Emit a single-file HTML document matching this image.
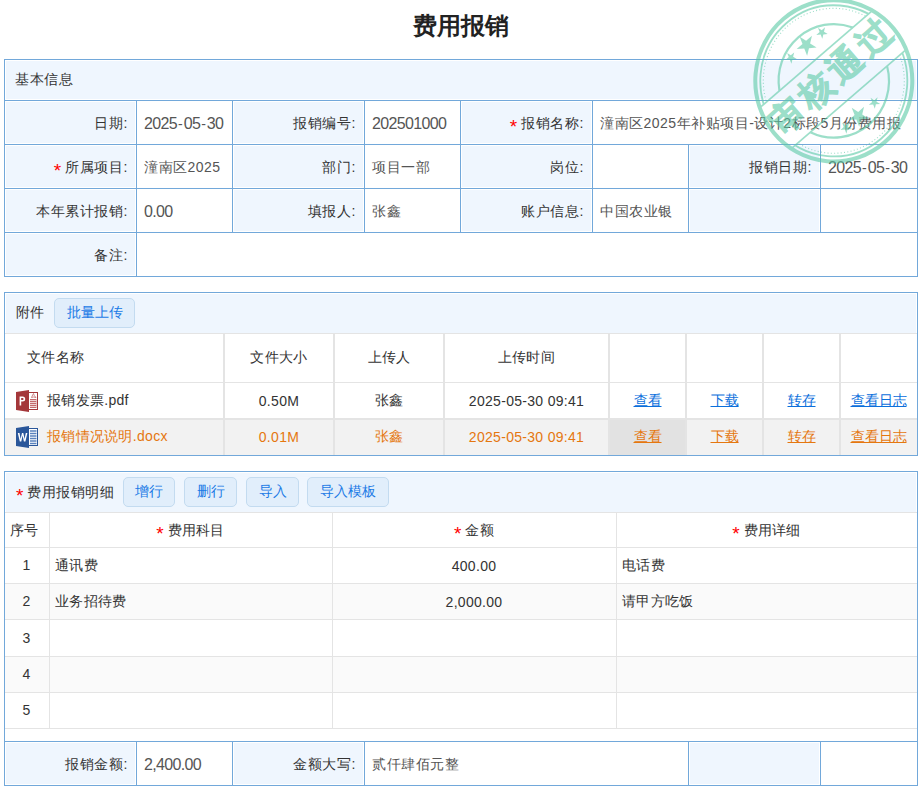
<!DOCTYPE html>
<html><head><meta charset="utf-8"><style>
html,body{margin:0;padding:0;background:#fff;}
body{width:922px;height:790px;position:relative;overflow:hidden;font-family:"Liberation Sans",sans-serif;}
.t{position:absolute;display:flex;align-items:center;box-sizing:border-box;white-space:nowrap;}
.d{font-size:16px;letter-spacing:-0.65px;}.h{margin:0 1px;letter-spacing:0;}
.btn{justify-content:center;background:#e1eefb;border:1px solid #c3dbf0;border-radius:5px;color:#1a7ae6;font-size:14px;}
</style></head><body>
<div class="t" style="left:0;top:8px;width:922px;height:36px;justify-content:center;font-size:24px;font-weight:bold;color:#222">费用报销</div>
<div style="position:absolute;left:6px;top:61px;width:910px;height:38px;background:#eff6fe;"></div>
<div style="position:absolute;left:6px;top:102px;width:129px;height:41px;background:#eff6fe;"></div>
<div style="position:absolute;left:6px;top:146px;width:129px;height:41px;background:#eff6fe;"></div>
<div style="position:absolute;left:6px;top:190px;width:129px;height:41px;background:#eff6fe;"></div>
<div style="position:absolute;left:6px;top:234px;width:129px;height:41px;background:#eff6fe;"></div>
<div style="position:absolute;left:234px;top:102px;width:129px;height:41px;background:#eff6fe;"></div>
<div style="position:absolute;left:462px;top:102px;width:129px;height:41px;background:#eff6fe;"></div>
<div style="position:absolute;left:234px;top:146px;width:129px;height:41px;background:#eff6fe;"></div>
<div style="position:absolute;left:462px;top:146px;width:129px;height:41px;background:#eff6fe;"></div>
<div style="position:absolute;left:234px;top:190px;width:129px;height:41px;background:#eff6fe;"></div>
<div style="position:absolute;left:462px;top:190px;width:129px;height:41px;background:#eff6fe;"></div>
<div style="position:absolute;left:690px;top:146px;width:129px;height:41px;background:#eff6fe;"></div>
<div style="position:absolute;left:690px;top:190px;width:129px;height:41px;background:#eff6fe;"></div>
<div style="position:absolute;left:4px;top:59px;width:914px;height:1px;background:#72a8da;"></div>
<div style="position:absolute;left:4px;top:276px;width:914px;height:1px;background:#72a8da;"></div>
<div style="position:absolute;left:4px;top:59px;width:1px;height:218px;background:#72a8da;"></div>
<div style="position:absolute;left:917px;top:59px;width:1px;height:218px;background:#72a8da;"></div>
<div style="position:absolute;left:4px;top:100px;width:914px;height:1px;background:#72a8da;"></div>
<div style="position:absolute;left:4px;top:144px;width:914px;height:1px;background:#72a8da;"></div>
<div style="position:absolute;left:4px;top:188px;width:914px;height:1px;background:#72a8da;"></div>
<div style="position:absolute;left:4px;top:232px;width:914px;height:1px;background:#72a8da;"></div>
<div style="position:absolute;left:136px;top:100px;width:1px;height:45px;background:#72a8da;"></div>
<div style="position:absolute;left:232px;top:100px;width:1px;height:45px;background:#72a8da;"></div>
<div style="position:absolute;left:364px;top:100px;width:1px;height:45px;background:#72a8da;"></div>
<div style="position:absolute;left:460px;top:100px;width:1px;height:45px;background:#72a8da;"></div>
<div style="position:absolute;left:592px;top:100px;width:1px;height:45px;background:#72a8da;"></div>
<div style="position:absolute;left:136px;top:144px;width:1px;height:89px;background:#72a8da;"></div>
<div style="position:absolute;left:232px;top:144px;width:1px;height:89px;background:#72a8da;"></div>
<div style="position:absolute;left:364px;top:144px;width:1px;height:89px;background:#72a8da;"></div>
<div style="position:absolute;left:460px;top:144px;width:1px;height:89px;background:#72a8da;"></div>
<div style="position:absolute;left:592px;top:144px;width:1px;height:89px;background:#72a8da;"></div>
<div style="position:absolute;left:688px;top:144px;width:1px;height:89px;background:#72a8da;"></div>
<div style="position:absolute;left:820px;top:144px;width:1px;height:89px;background:#72a8da;"></div>
<div style="position:absolute;left:136px;top:232px;width:1px;height:45px;background:#72a8da;"></div>
<div class="t" style="left:4px;top:59px;width:300px;height:41px;justify-content:flex-start;padding-left:11px;color:#333;font-size:14px;letter-spacing:0.5px;">基本信息</div>
<div class="t" style="left:4px;top:100px;width:132px;height:44px;justify-content:flex-end;padding-right:8px;color:#333;font-size:14px;letter-spacing:0.6px;padding-top:3px;">日期:</div>
<div class="t" style="left:136px;top:100px;width:96px;height:44px;justify-content:flex-start;padding-left:8px;color:#555;font-size:14px;overflow:hidden;white-space:nowrap;letter-spacing:0.5px;padding-top:3px;"><span class="d">2025</span><span class="h">-</span><span class="d">05</span><span class="h">-</span><span class="d">30</span></div>
<div class="t" style="left:232px;top:100px;width:132px;height:44px;justify-content:flex-end;padding-right:8px;color:#333;font-size:14px;letter-spacing:0.6px;padding-top:3px;">报销编号:</div>
<div class="t" style="left:364px;top:100px;width:96px;height:44px;justify-content:flex-start;padding-left:8px;color:#555;font-size:14px;overflow:hidden;white-space:nowrap;letter-spacing:0.5px;padding-top:3px;"><span class="d">202501000</span></div>
<div class="t" style="left:460px;top:100px;width:132px;height:44px;justify-content:flex-end;padding-right:8px;color:#333;font-size:14px;letter-spacing:0.6px;padding-top:3px;"><span style="color:#f00;font-size:19px;line-height:10px;position:relative;top:3px;margin-right:4px;letter-spacing:0">*</span>报销名称:</div>
<div class="t" style="left:592px;top:100px;width:325px;height:44px;justify-content:flex-start;padding-left:8px;color:#555;font-size:14px;overflow:hidden;white-space:nowrap;letter-spacing:0.5px;padding-top:3px;">潼南区2025年补贴项目-设计2标段5月份费用报</div>
<div class="t" style="left:4px;top:144px;width:132px;height:44px;justify-content:flex-end;padding-right:8px;color:#333;font-size:14px;letter-spacing:0.6px;padding-top:3px;"><span style="color:#f00;font-size:19px;line-height:10px;position:relative;top:3px;margin-right:4px;letter-spacing:0">*</span>所属项目:</div>
<div class="t" style="left:136px;top:144px;width:96px;height:44px;justify-content:flex-start;padding-left:8px;color:#555;font-size:14px;overflow:hidden;white-space:nowrap;letter-spacing:0.5px;padding-top:3px;">潼南区2025</div>
<div class="t" style="left:232px;top:144px;width:132px;height:44px;justify-content:flex-end;padding-right:8px;color:#333;font-size:14px;letter-spacing:0.6px;padding-top:3px;">部门:</div>
<div class="t" style="left:364px;top:144px;width:96px;height:44px;justify-content:flex-start;padding-left:8px;color:#555;font-size:14px;overflow:hidden;white-space:nowrap;letter-spacing:0.5px;padding-top:3px;">项目一部</div>
<div class="t" style="left:460px;top:144px;width:132px;height:44px;justify-content:flex-end;padding-right:8px;color:#333;font-size:14px;letter-spacing:0.6px;padding-top:3px;">岗位:</div>
<div class="t" style="left:688px;top:144px;width:132px;height:44px;justify-content:flex-end;padding-right:8px;color:#333;font-size:14px;letter-spacing:0.6px;padding-top:3px;">报销日期:</div>
<div class="t" style="left:820px;top:144px;width:97px;height:44px;justify-content:flex-start;padding-left:8px;color:#555;font-size:14px;overflow:hidden;white-space:nowrap;letter-spacing:0.5px;padding-top:3px;"><span class="d">2025</span><span class="h">-</span><span class="d">05</span><span class="h">-</span><span class="d">30</span></div>
<div class="t" style="left:4px;top:188px;width:132px;height:44px;justify-content:flex-end;padding-right:8px;color:#333;font-size:14px;letter-spacing:0.6px;padding-top:3px;">本年累计报销:</div>
<div class="t" style="left:136px;top:188px;width:96px;height:44px;justify-content:flex-start;padding-left:8px;color:#555;font-size:14px;overflow:hidden;white-space:nowrap;letter-spacing:0.5px;padding-top:3px;"><span class="d">0.00</span></div>
<div class="t" style="left:232px;top:188px;width:132px;height:44px;justify-content:flex-end;padding-right:8px;color:#333;font-size:14px;letter-spacing:0.6px;padding-top:3px;">填报人:</div>
<div class="t" style="left:364px;top:188px;width:96px;height:44px;justify-content:flex-start;padding-left:8px;color:#555;font-size:14px;overflow:hidden;white-space:nowrap;letter-spacing:0.5px;padding-top:3px;">张鑫</div>
<div class="t" style="left:460px;top:188px;width:132px;height:44px;justify-content:flex-end;padding-right:8px;color:#333;font-size:14px;letter-spacing:0.6px;padding-top:3px;">账户信息:</div>
<div class="t" style="left:592px;top:188px;width:96px;height:44px;justify-content:flex-start;padding-left:8px;color:#555;font-size:14px;overflow:hidden;white-space:nowrap;letter-spacing:0.5px;padding-top:3px;">中国农业银</div>
<div class="t" style="left:4px;top:232px;width:132px;height:44px;justify-content:flex-end;padding-right:8px;color:#333;font-size:14px;letter-spacing:0.6px;padding-top:3px;">备注:</div>
<div style="position:absolute;left:6px;top:294px;width:910px;height:39px;background:#eff6fe;"></div>
<div style="position:absolute;left:4px;top:292px;width:914px;height:1px;background:#72a8da;"></div>
<div style="position:absolute;left:4px;top:455px;width:914px;height:1px;background:#72a8da;"></div>
<div style="position:absolute;left:4px;top:292px;width:1px;height:164px;background:#72a8da;"></div>
<div style="position:absolute;left:917px;top:292px;width:1px;height:164px;background:#72a8da;"></div>
<div class="t" style="left:4px;top:292px;width:100px;height:41px;justify-content:flex-start;padding-left:12px;color:#333;font-size:14px;letter-spacing:0.3px;">附件</div>
<div class="t btn" style="left:54px;top:298px;width:81px;height:30px;">批量上传</div>
<div style="position:absolute;left:5px;top:419px;width:912px;height:36px;background:#f2f2f2;"></div>
<div style="position:absolute;left:610px;top:419px;width:76px;height:36px;background:#e2e2e2;"></div>
<div style="position:absolute;left:5px;top:333px;width:912px;height:1px;background:#e4e4e4;"></div>
<div style="position:absolute;left:5px;top:382px;width:912px;height:1px;background:#e4e4e4;"></div>
<div style="position:absolute;left:5px;top:418px;width:912px;height:2px;background:#e4e4e4;"></div>
<div style="position:absolute;left:223px;top:333px;width:2px;height:122px;background:#e4e4e4;"></div>
<div style="position:absolute;left:333px;top:333px;width:2px;height:122px;background:#e4e4e4;"></div>
<div style="position:absolute;left:443px;top:333px;width:2px;height:122px;background:#e4e4e4;"></div>
<div style="position:absolute;left:608px;top:333px;width:2px;height:122px;background:#e4e4e4;"></div>
<div style="position:absolute;left:685px;top:333px;width:2px;height:122px;background:#e4e4e4;"></div>
<div style="position:absolute;left:762px;top:333px;width:2px;height:122px;background:#e4e4e4;"></div>
<div style="position:absolute;left:839px;top:333px;width:2px;height:122px;background:#e4e4e4;"></div>
<div class="t" style="left:4px;top:333px;width:220px;height:49px;justify-content:flex-start;padding-left:23px;color:#333;font-size:14px;letter-spacing:0.3px;">文件名称</div>
<div class="t" style="left:224px;top:333px;width:110px;height:49px;justify-content:center;color:#333;font-size:14px;letter-spacing:0.3px;">文件大小</div>
<div class="t" style="left:334px;top:333px;width:110px;height:49px;justify-content:center;color:#333;font-size:14px;letter-spacing:0.3px;">上传人</div>
<div class="t" style="left:444px;top:333px;width:165px;height:49px;justify-content:center;color:#333;font-size:14px;letter-spacing:0.3px;">上传时间</div>
<div class="t" style="left:4px;top:382px;width:220px;height:37px;justify-content:flex-start;padding-left:43px;color:#333;font-size:14px;letter-spacing:0.3px;">报销发票.pdf</div>
<svg style="position:absolute;left:16px;top:390px" width="23" height="22" viewBox="0 0 23 22"><rect x="12.5" y="2.5" width="9" height="17" fill="#fff" stroke="#a4373a" stroke-width="1"/><path d="M15.5 7.5 Q17 4 17.5 3.5 Q18 6 20 7.5 Q17.5 6.5 15.5 7.5Z" fill="none" stroke="#c46a6c" stroke-width="0.8"/><rect x="14" y="9" width="6.5" height="9" fill="#c46a6c"/><path d="M14 10.5H20.5M14 12.5H20.5M14 14.5H20.5M14 16.5H20.5" stroke="#fff" stroke-width="0.7"/><path d="M0 2L13 0V22L0 20Z" fill="#a4373a"/><path d="M3.6 15.5V6.5H6.6Q9.2 6.5 9.2 9Q9.2 11.5 6.6 11.5H5.2V15.5Z M5.2 8V10.1H6.4Q7.6 10.1 7.6 9Q7.6 8 6.4 8Z" fill="#fff" fill-rule="evenodd"/></svg>
<div class="t" style="left:224px;top:382px;width:110px;height:37px;justify-content:center;color:#333;font-size:14px;letter-spacing:0.3px;">0.50M</div>
<div class="t" style="left:334px;top:382px;width:110px;height:37px;justify-content:center;color:#333;font-size:14px;letter-spacing:0.3px;">张鑫</div>
<div class="t" style="left:444px;top:382px;width:165px;height:37px;justify-content:center;color:#333;font-size:14px;letter-spacing:0.3px;">2025-05-30 09:41</div>
<div class="t" style="left:609px;top:382px;width:77px;height:37px;justify-content:center;color:#0b6fdc;font-size:14px;"><u>查看</u></div>
<div class="t" style="left:686px;top:382px;width:77px;height:37px;justify-content:center;color:#0b6fdc;font-size:14px;"><u>下载</u></div>
<div class="t" style="left:763px;top:382px;width:77px;height:37px;justify-content:center;color:#0b6fdc;font-size:14px;"><u>转存</u></div>
<div class="t" style="left:840px;top:382px;width:77px;height:37px;justify-content:center;color:#0b6fdc;font-size:14px;"><u>查看日志</u></div>
<div class="t" style="left:4px;top:419px;width:220px;height:36px;justify-content:flex-start;padding-left:43px;color:#e5770f;font-size:14px;letter-spacing:0.3px;">报销情况说明.docx</div>
<svg style="position:absolute;left:16px;top:426px" width="23" height="22" viewBox="0 0 23 22"><rect x="12.5" y="2.5" width="9" height="17" fill="#fff" stroke="#2b579a" stroke-width="1"/><path d="M14 5H20.5M14 7.5H20.5M14 10H20.5M14 12.5H20.5M14 15H20.5M14 17.5H20.5" stroke="#5b82bd" stroke-width="1.3"/><path d="M0 2L13 0V22L0 20Z" fill="#2b579a"/><path d="M1.8 7H3.5L4.6 13L6 7H7.3L8.6 13L9.8 7H11.4L9.4 15.5H7.9L6.6 9.6L5.3 15.5H3.8Z" fill="#fff"/></svg>
<div class="t" style="left:224px;top:419px;width:110px;height:36px;justify-content:center;color:#e5770f;font-size:14px;letter-spacing:0.3px;">0.01M</div>
<div class="t" style="left:334px;top:419px;width:110px;height:36px;justify-content:center;color:#e5770f;font-size:14px;letter-spacing:0.3px;">张鑫</div>
<div class="t" style="left:444px;top:419px;width:165px;height:36px;justify-content:center;color:#e5770f;font-size:14px;letter-spacing:0.3px;">2025-05-30 09:41</div>
<div class="t" style="left:609px;top:419px;width:77px;height:36px;justify-content:center;color:#e5770f;font-size:14px;"><u>查看</u></div>
<div class="t" style="left:686px;top:419px;width:77px;height:36px;justify-content:center;color:#e5770f;font-size:14px;"><u>下载</u></div>
<div class="t" style="left:763px;top:419px;width:77px;height:36px;justify-content:center;color:#e5770f;font-size:14px;"><u>转存</u></div>
<div class="t" style="left:840px;top:419px;width:77px;height:36px;justify-content:center;color:#e5770f;font-size:14px;"><u>查看日志</u></div>
<div style="position:absolute;left:6px;top:473px;width:910px;height:39px;background:#eff6fe;"></div>
<div style="position:absolute;left:4px;top:471px;width:914px;height:1px;background:#72a8da;"></div>
<div style="position:absolute;left:4px;top:785px;width:914px;height:1px;background:#72a8da;"></div>
<div style="position:absolute;left:4px;top:471px;width:1px;height:315px;background:#72a8da;"></div>
<div style="position:absolute;left:917px;top:471px;width:1px;height:315px;background:#72a8da;"></div>
<div class="t" style="left:4px;top:471px;width:200px;height:41px;justify-content:flex-start;padding-left:12px;color:#333;font-size:14px;letter-spacing:0.5px;padding-top:3px;"><span style="color:#f00;font-size:19px;line-height:10px;position:relative;top:3px;margin-right:4px;letter-spacing:0">*</span>费用报销明细</div>
<div class="t btn" style="left:123px;top:477px;width:52px;height:30px;">增行</div>
<div class="t btn" style="left:184px;top:477px;width:53px;height:30px;">删行</div>
<div class="t btn" style="left:246px;top:477px;width:53px;height:30px;">导入</div>
<div class="t btn" style="left:307px;top:477px;width:82px;height:30px;">导入模板</div>
<div style="position:absolute;left:5px;top:583px;width:912px;height:36px;background:#fafafa;"></div>
<div style="position:absolute;left:5px;top:656px;width:912px;height:36px;background:#fafafa;"></div>
<div style="position:absolute;left:5px;top:512px;width:912px;height:1px;background:#e4e4e4;"></div>
<div style="position:absolute;left:5px;top:547px;width:912px;height:1px;background:#e4e4e4;"></div>
<div style="position:absolute;left:5px;top:583px;width:912px;height:1px;background:#e4e4e4;"></div>
<div style="position:absolute;left:5px;top:619px;width:912px;height:1px;background:#e4e4e4;"></div>
<div style="position:absolute;left:5px;top:656px;width:912px;height:1px;background:#e4e4e4;"></div>
<div style="position:absolute;left:5px;top:692px;width:912px;height:1px;background:#e4e4e4;"></div>
<div style="position:absolute;left:5px;top:728px;width:912px;height:1px;background:#e4e4e4;"></div>
<div style="position:absolute;left:49px;top:512px;width:1px;height:217px;background:#e4e4e4;"></div>
<div style="position:absolute;left:332px;top:512px;width:1px;height:217px;background:#e4e4e4;"></div>
<div style="position:absolute;left:616px;top:512px;width:1px;height:217px;background:#e4e4e4;"></div>
<div class="t" style="left:4px;top:512px;width:45px;height:35px;justify-content:flex-start;padding-left:6px;color:#333;font-size:14px;padding-top:3px;">序号</div>
<div class="t" style="left:49px;top:512px;width:283px;height:35px;justify-content:center;color:#333;font-size:14px;letter-spacing:0.3px;padding-top:2px;"><span style="color:#f00;font-size:19px;line-height:10px;position:relative;top:3px;margin-right:4px;letter-spacing:0">*</span>费用科目</div>
<div class="t" style="left:332px;top:512px;width:284px;height:35px;justify-content:center;color:#333;font-size:14px;letter-spacing:0.3px;padding-top:2px;"><span style="color:#f00;font-size:19px;line-height:10px;position:relative;top:3px;margin-right:4px;letter-spacing:0">*</span>金额</div>
<div class="t" style="left:616px;top:512px;width:301px;height:35px;justify-content:center;color:#333;font-size:14px;letter-spacing:0.3px;padding-top:2px;"><span style="color:#f00;font-size:19px;line-height:10px;position:relative;top:3px;margin-right:4px;letter-spacing:0">*</span>费用详细</div>
<div class="t" style="left:4px;top:547px;width:45px;height:36px;justify-content:center;color:#333;font-size:14px;">1</div>
<div class="t" style="left:4px;top:583px;width:45px;height:36px;justify-content:center;color:#333;font-size:14px;">2</div>
<div class="t" style="left:4px;top:619px;width:45px;height:37px;justify-content:center;color:#333;font-size:14px;">3</div>
<div class="t" style="left:4px;top:656px;width:45px;height:36px;justify-content:center;color:#333;font-size:14px;">4</div>
<div class="t" style="left:4px;top:692px;width:45px;height:36px;justify-content:center;color:#333;font-size:14px;">5</div>
<div class="t" style="left:49px;top:547px;width:283px;height:36px;justify-content:flex-start;padding-left:6px;color:#333;font-size:14px;letter-spacing:0.3px;padding-top:2px;">通讯费</div>
<div class="t" style="left:49px;top:583px;width:283px;height:36px;justify-content:flex-start;padding-left:6px;color:#333;font-size:14px;letter-spacing:0.3px;padding-top:2px;">业务招待费</div>
<div class="t" style="left:332px;top:547px;width:284px;height:36px;justify-content:center;color:#333;font-size:14px;letter-spacing:0.3px;padding-top:2px;">400.00</div>
<div class="t" style="left:332px;top:583px;width:284px;height:36px;justify-content:center;color:#333;font-size:14px;letter-spacing:0.3px;padding-top:2px;">2,000.00</div>
<div class="t" style="left:616px;top:547px;width:301px;height:36px;justify-content:flex-start;padding-left:6px;color:#333;font-size:14px;letter-spacing:0.3px;padding-top:2px;">电话费</div>
<div class="t" style="left:616px;top:583px;width:301px;height:36px;justify-content:flex-start;padding-left:6px;color:#333;font-size:14px;letter-spacing:0.3px;padding-top:2px;">请甲方吃饭</div>
<div style="position:absolute;left:6px;top:743px;width:129px;height:41px;background:#eff6fe;"></div>
<div style="position:absolute;left:234px;top:743px;width:129px;height:41px;background:#eff6fe;"></div>
<div style="position:absolute;left:690px;top:743px;width:129px;height:41px;background:#eff6fe;"></div>
<div style="position:absolute;left:4px;top:741px;width:914px;height:1px;background:#72a8da;"></div>
<div style="position:absolute;left:136px;top:741px;width:1px;height:45px;background:#72a8da;"></div>
<div style="position:absolute;left:232px;top:741px;width:1px;height:45px;background:#72a8da;"></div>
<div style="position:absolute;left:364px;top:741px;width:1px;height:45px;background:#72a8da;"></div>
<div style="position:absolute;left:688px;top:741px;width:1px;height:45px;background:#72a8da;"></div>
<div style="position:absolute;left:820px;top:741px;width:1px;height:45px;background:#72a8da;"></div>
<div class="t" style="left:4px;top:741px;width:132px;height:44px;justify-content:flex-end;padding-right:8px;color:#333;font-size:14px;letter-spacing:0.6px;padding-top:3px;">报销金额:</div>
<div class="t" style="left:136px;top:741px;width:96px;height:44px;justify-content:flex-start;padding-left:8px;color:#555;font-size:14px;overflow:hidden;white-space:nowrap;letter-spacing:0.5px;padding-top:3px;"><span class="d">2,400.00</span></div>
<div class="t" style="left:232px;top:741px;width:132px;height:44px;justify-content:flex-end;padding-right:8px;color:#333;font-size:14px;letter-spacing:0.6px;padding-top:3px;">金额大写:</div>
<div class="t" style="left:364px;top:741px;width:324px;height:44px;justify-content:flex-start;padding-left:8px;color:#555;font-size:14px;overflow:hidden;white-space:nowrap;letter-spacing:0.5px;padding-top:3px;">贰仟肆佰元整</div>
<svg style="position:absolute;left:0;top:0" width="922" height="200" viewBox="0 0 922 200">
<g transform="translate(833.8 80.8) scale(1 1.028) rotate(-40)" opacity="0.6" fill="#5ccaa6" stroke="#5ccaa6">
<circle r="78.5" fill="none" stroke-width="4"/>
<clipPath id="ob"><rect x="-100" y="-100" width="200" height="72.5"/><rect x="-100" y="23.2" width="200" height="76.8"/></clipPath>
<g clip-path="url(#ob)"><circle r="73.5" fill="none" stroke-width="1.8"/>
<circle r="70.5" fill="none" stroke-width="1.1" stroke-dasharray="1 2.3"/></g>
<path d="M-47.86 -27.5 A55.2 55.2 0 0 1 47.86 -27.5 M50.09 23.2 A55.2 55.2 0 0 1 -50.09 23.2" fill="none" stroke-width="2.2"/>
<line x1="-71.92" y1="-27.5" x2="71.92" y2="-27.5" stroke-width="1.7"/>
<line x1="-73.42" y1="23.2" x2="73.42" y2="23.2" stroke-width="1.7"/>
<text transform="rotate(-1.5)" x="2.2" y="7" text-anchor="middle" font-size="34" font-weight="bold" letter-spacing="5" stroke-width="0.8" style="font-family:'Liberation Sans',sans-serif;font-weight:700">审核通过</text>
<g stroke="none">
<path transform="translate(-18.3 -44.8) scale(6)" d="M0,-1 L0.225,-0.309 L0.951,-0.309 L0.363,0.118 L0.588,0.809 L0,0.382 L-0.588,0.809 L-0.363,0.118 L-0.951,-0.309 L-0.225,-0.309Z"/><path transform="translate(1.4 -44.3) scale(10.5)" d="M0,-1 L0.225,-0.309 L0.951,-0.309 L0.363,0.118 L0.588,0.809 L0,0.382 L-0.588,0.809 L-0.363,0.118 L-0.951,-0.309 L-0.225,-0.309Z"/><path transform="translate(21 -43.6) scale(6)" d="M0,-1 L0.225,-0.309 L0.951,-0.309 L0.363,0.118 L0.588,0.809 L0,0.382 L-0.588,0.809 L-0.363,0.118 L-0.951,-0.309 L-0.225,-0.309Z"/>
<path transform="translate(-19.9 42.7) scale(6)" d="M0,-1 L0.225,-0.309 L0.951,-0.309 L0.363,0.118 L0.588,0.809 L0,0.382 L-0.588,0.809 L-0.363,0.118 L-0.951,-0.309 L-0.225,-0.309Z"/><path transform="translate(-3.1 42.1) scale(10.5)" d="M0,-1 L0.225,-0.309 L0.951,-0.309 L0.363,0.118 L0.588,0.809 L0,0.382 L-0.588,0.809 L-0.363,0.118 L-0.951,-0.309 L-0.225,-0.309Z"/><path transform="translate(17.5 42.3) scale(6)" d="M0,-1 L0.225,-0.309 L0.951,-0.309 L0.363,0.118 L0.588,0.809 L0,0.382 L-0.588,0.809 L-0.363,0.118 L-0.951,-0.309 L-0.225,-0.309Z"/>
</g>
</g>
</svg>
</body></html>
